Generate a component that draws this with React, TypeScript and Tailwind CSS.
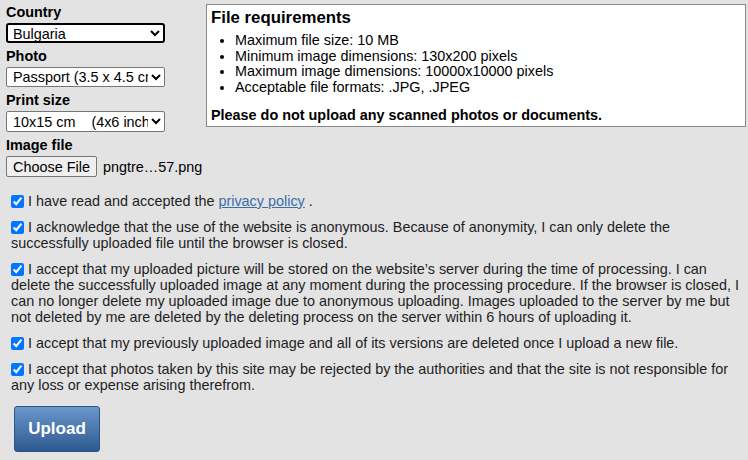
import React from 'react';

const checks: React.ReactNode[] = [
  <>
    I have read and accepted the{' '}
    <a href="#" className="text-[#3b6ea8] underline">
      privacy policy
    </a>{' '}
    .
  </>,
  <>
    I acknowledge that the use of the website is anonymous. Because of anonymity, I can only delete the
    successfully uploaded file until the browser is closed.
  </>,
  <>
    I accept that my uploaded picture will be stored on the website’s server during the time of processing. I can
    delete the successfully uploaded image at any moment during the processing procedure. If the browser is closed, I
    can no longer delete my uploaded image due to anonymous uploading. Images uploaded to the server by me but not
    deleted by me are deleted by the deleting process on the server within 6 hours of uploading it.
  </>,
  <>I accept that my previously uploaded image and all of its versions are deleted once I upload a new file.</>,
  <>
    I accept that photos taken by this site may be rejected by the authorities and that the site is not responsible for
    any loss or expense arising therefrom.
  </>,
];

const requirements = [
  'Maximum file size: 10 MB',
  'Minimum image dimensions: 130x200 pixels',
  'Maximum image dimensions: 10000x10000 pixels',
  'Acceptable file formats: .JPG, .JPEG',
];

export default function App() {
  return (
    <div className="w-[748px] h-[460px] overflow-hidden bg-[#e3e3e3] text-[#1e1e1e] font-['Liberation_Sans',Arial,sans-serif] text-[14.4px] leading-[16px]">
      <div className="flex pt-[4px]">
        {/* left: form fields */}
        <div className="ml-[6px] w-[159px] shrink-0 flex flex-col">
          <label className="font-bold text-black">Country</label>
          <select
            defaultValue="bg"
            className="mt-[3px] h-[20px] bg-white border-2 border-black rounded-[3px] text-[14.4px] text-black pl-[1px]"
          >
            <option value="bg">Bulgaria</option>
          </select>
          <label className="mt-[5px] font-bold text-black">Photo</label>
          <select className="mt-[3px] h-[20px] bg-white border border-[#767676] rounded-[2px] text-[14.4px] text-black pl-[2px]">
            <option>Passport (3.5 x 4.5 cm)</option>
          </select>
          <label className="mt-[5px] font-bold text-black">Print size</label>
          <select className="mt-[3px] h-[21px] bg-white border border-[#767676] rounded-[2px] text-[14.4px] text-black pl-[2px]">
            <option>{'10x15 cm\u00a0\u00a0\u00a0\u00a0(4x6 inches)'}</option>
          </select>
          <label className="mt-[5px] font-bold text-black">Image file</label>
          <div className="mt-[3px] flex items-center whitespace-nowrap">
            <button className="w-[91px] h-[21px] shrink-0 bg-[#efefef] border border-[#767676] rounded-[2px] text-[14.4px] text-black">
              Choose File
            </button>
            <span className="ml-[6px] text-black">pngtre…57.png</span>
          </div>
        </div>

        {/* right: requirements box */}
        <div className="ml-[41px] w-[540px] self-start bg-white border border-[#8a8a8a] px-[4px] pt-[3px] pb-[3px] text-black">
          <h3 className="font-bold text-[16.8px] leading-[19px]">File requirements</h3>
          <ul className="mt-[6px] pl-[24px] list-disc leading-[15.7px]">
            {requirements.map((r) => (
              <li key={r}>{r}</li>
            ))}
          </ul>
          <p className="mt-[11px] font-bold leading-[16px]">
            Please do not upload any scanned photos or documents.
          </p>
        </div>
      </div>

      {/* consent checkboxes */}
      <div className="mt-[16px] pl-[11px] pr-[6px] flex flex-col gap-[10px]">
        {checks.map((c, i) => (
          <p key={i}>
            <input
              type="checkbox"
              defaultChecked
              className="w-[13px] h-[13px] mr-[4px] align-[-2px] accent-[#0075ff]"
            />
            {c}
          </p>
        ))}
      </div>

      <div className="mt-[13px] ml-[14px]">
        <button className="w-[86px] h-[46px] rounded-[3px] border border-[#2c5587] bg-gradient-to-b from-[#6d97cb] to-[#2c5a90] text-white font-bold text-[17px]">
          Upload
        </button>
      </div>
    </div>
  );
}
